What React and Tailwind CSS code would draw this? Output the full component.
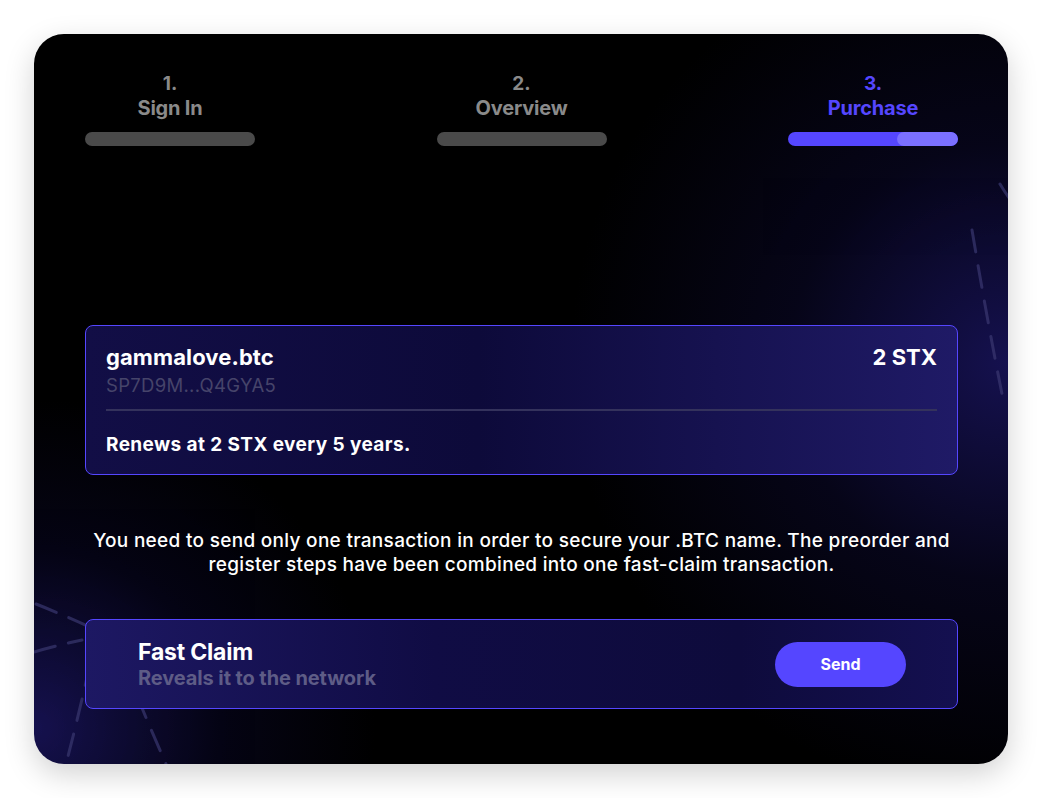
import React from 'react';

const steps = [
  { num: '1.', label: 'Sign In', active: false },
  { num: '2.', label: 'Overview', active: false },
  { num: '3.', label: 'Purchase', active: true },
];

// Decorative dashed arcs in the card background
const Streaks = () => (
  <svg className="pointer-events-none absolute inset-0 h-full w-full" viewBox="0 0 974 730" fill="none">
    <g stroke="#3a3870" strokeWidth="3" strokeDasharray="22 14" strokeLinecap="round" opacity="0.7">
      <path d="M938 196 Q952 280 968 360" />
      <path d="M966 150 Q972 160 978 168" />
      <path d="M2 570 Q40 585 110 618" />
      <path d="M0 618 Q20 612 48 606" />
      <path d="M56 630 Q45 680 32 730" />
      <path d="M90 630 Q110 680 132 730" />
    </g>
  </svg>
);

export default function App() {
  return (
    <div className="min-h-screen bg-white p-[34px] font-['Inter',sans-serif]">
      <div className="relative h-[730px] w-[974px] overflow-hidden rounded-[30px] bg-black bg-[radial-gradient(ellipse_45%_60%_at_100%_45%,#15114f_0%,rgba(10,8,40,0.6)_50%,transparent_100%),radial-gradient(ellipse_35%_45%_at_0%_95%,#16124f_0%,rgba(10,8,40,0.5)_55%,transparent_100%)] shadow-[0_10px_30px_rgba(0,0,0,0.18)]">
        <Streaks />
        <div className="relative flex flex-col pl-[51px] pr-[50px] pt-[38px]">
          <div className="flex justify-between">
            {steps.map((s) => (
              <div key={s.num} className="flex w-[170px] flex-col items-center">
                <div className={`text-[19px] font-bold leading-6 ${s.active ? 'text-[#5546ff]' : 'text-[#8a8a8a]'}`}>{s.num}</div>
                <div className={`text-[20px] font-bold leading-6 tracking-[-0.2px] ${s.active ? 'text-[#5546ff]' : 'text-[#8a8a8a]'}`}>{s.label}</div>
                {s.active ? (
                  <div className="mt-[12px] flex h-[14px] w-full overflow-hidden rounded-full bg-[#5546ff]">
                    <div className="ml-auto h-full w-[61px] rounded-full bg-[#7b70ff]" />
                  </div>
                ) : (
                  <div className="mt-[12px] h-[14px] w-full rounded-full bg-[#4a4a4a]" />
                )}
              </div>
            ))}
          </div>

          <div className="mt-[179px] rounded-[8px] border border-[#5546ff] bg-[linear-gradient(90deg,#120e46_0%,#0d0a3a_45%,#1f1a66_100%)] px-[20px] pt-[17px] pb-[17px]">
            <div className="flex items-center justify-between">
              <div className="text-[22px] font-bold leading-7 tracking-[0.1px] text-white">gammalove.btc</div>
              <div className="text-[22px] font-bold leading-7 text-white">2 STX</div>
            </div>
            <div className="mt-[2px] text-[18.5px] leading-6 tracking-[0.3px] text-[#46446a]">SP7D9M...Q4GYA5</div>
            <div className="mt-[12px] h-[2px] bg-[#34325c]" />
            <div className="mt-[22px] text-[19px] font-bold leading-6 tracking-[0.4px] text-white">Renews at 2 STX every 5 years.</div>
          </div>

          <p className="mt-[54px] text-center text-[19px] font-medium leading-6 tracking-[0.3px] text-white">
            You need to send only one transaction in order to secure your .BTC name. The preorder and
            <br />
            register steps have been combined into one fast-claim transaction.
          </p>

          <div className="mt-[42px] flex h-[90px] items-center justify-between rounded-[8px] border border-[#5546ff] bg-[linear-gradient(90deg,#1d1863_0%,#100c44_40%,#0e0b3c_75%,#141050_100%)] pl-[52px] pr-[51px]">
            <div className="flex flex-col">
              <div className="text-[23px] font-bold leading-7 tracking-[-0.2px] text-white">Fast Claim</div>
              <div className="text-[20px] font-bold leading-6 tracking-[-0.1px] text-[#5e5c86]">Reveals it to the network</div>
            </div>
            <button className="h-[45px] w-[131px] rounded-full bg-[#5546ff] text-[16px] font-bold text-white">Send</button>
          </div>
        </div>
      </div>
    </div>
  );
}
